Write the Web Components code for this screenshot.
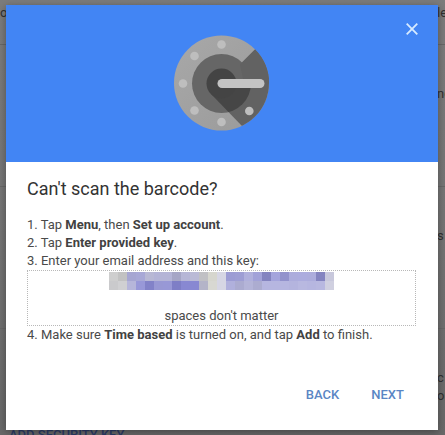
<!DOCTYPE html>
<html lang="en">
<head>
<meta charset="utf-8">
<title>Set up Authenticator</title>
<style>
  body { margin: 0; font-family: Roboto, sans-serif; font-size: 13px; line-height: 18px; color: #4a4a4a; background: #757575; }
</style>
</head>
<body>
<app-shell>
  <settings-page slot="page"></settings-page>
  <setup-dialog>
    <authenticator-logo slot="logo"></authenticator-logo>
    <setup-steps></setup-steps>
    <text-button slot="actions">BACK</text-button>
    <text-button slot="actions">NEXT</text-button>
  </setup-dialog>
</app-shell>
<script>
const define = (name, html, init) => customElements.define(name, class extends HTMLElement {
  constructor() {
    super();
    this.attachShadow({ mode: 'open' }).innerHTML = html;
    if (init) init(this.shadowRoot);
  }
});

define('app-shell', `
<style>
  :host { display: grid; grid-template: minmax(0, 1fr) / minmax(0, 1fr); height: 100vh; overflow: hidden; }
  .page, .over { grid-area: 1 / 1; min-width: 0; min-height: 0; }
  .over { padding: 5px 7px 5px 6px; z-index: 1; display: flex; flex-direction: column; }
</style>
<div class="page"><slot name="page"></slot></div>
<div class="over"><slot></slot></div>`);

define('settings-page', `
<style>
  :host { display: block; height: 100%; overflow: hidden; color: #303030; background: linear-gradient(#7c7c7c, #757575 50%, #696969); }
  section { box-sizing: border-box; height: 142px; border-bottom: 1px solid #686868; display: flex; justify-content: space-between; }
  .first { height: 45px; }
  .last { border: 0; }
  p { margin: 0; padding-top: 40px; }
  .first p { padding-top: 4px; }
  .end { width: 8px; white-space: nowrap; }
  a { color: #2c3c68; text-decoration: none; font-weight: 500; padding: 97px 0 0 9px; white-space: nowrap; }
</style>
<section class="first"><p>or</p><p class="end">le</p></section>
<section><p></p><p class="end">no</p></section>
<section><p></p><p class="end">s</p></section>
<section class="last"><a href="#">ADD SECURITY KEY</a><p class="end">c<br>or</p></section>`);

define('setup-dialog', `
<style>
  :host { flex: 1; display: flex; flex-direction: column; background: #fff; box-shadow: 0 2px 8px rgba(0,0,0,.35); }
  header { background: #4285f4; height: 157px; display: grid; justify-items: center; position: relative; }
  .logo { padding-top: 30px; }
  button { position: absolute; top: 16px; right: 18px; width: 16px; height: 16px; padding: 0; border: 0; background: none; display: grid; place-items: center; }
  main { flex: 1; padding: 0 22px 0 21px; }
  h1 { margin: 0; padding: 15px 0; font-size: 18px; line-height: 24px; font-weight: 400; color: #333; }
  footer { display: flex; justify-content: flex-end; gap: 32px; padding: 0 34px 26px; }
</style>
<header>
  <div class="logo"><slot name="logo"></slot></div>
  <button aria-label="Close"><svg width="12" height="12" viewBox="0 0 12 12"><path d="M.7.7 11.3 11.3M11.3.7.7 11.3" stroke="#d7ebff" stroke-width="1.8"/></svg></button>
</header>
<main><h1>Can't scan the barcode?</h1><slot></slot></main>
<footer><slot name="actions"></slot></footer>`);

define('authenticator-logo', `
<style>:host, svg { display: block; }</style>
<svg width="96" height="96" viewBox="0 0 96 96" aria-hidden="true">
  <defs>
    <linearGradient id="ring" x2="1" y2="1"><stop stop-color="#a8a8a8"/><stop offset="1" stop-color="#9a9a9a"/></linearGradient>
    <clipPath id="disc"><circle cx="47.500" cy="48" r="47.500"/></clipPath>
    <clipPath id="hub"><circle cx="47.500" cy="48.500" r="29.500"/></clipPath>
  </defs>
  <circle cx="47.500" cy="48" r="47.500" fill="url(#ring)"/>
  <path d="M81.500 14 47.500 48 37 59 69 92 96 96V14Z" fill="#626262" clip-path="url(#disc)"/>
  <circle cx="47.500" cy="48.500" r="29.500" fill="#666"/>
  <path d="M81.500 14 66 29.500 70 48H96V14Z" fill="#626262" clip-path="url(#disc)"/>
  <path d="M37 59 69 92 96 48H47Z" fill="#464646" clip-path="url(#hub)"/>
  <circle cx="47.500" cy="48.500" r="15" fill="#444"/>
  <g fill="#bebebe">
    <circle cx="47.500" cy="9.500" r="4.300"/><circle cx="20.500" cy="21" r="4.300"/>
    <circle cx="9" cy="48.500" r="4.300"/><circle cx="20.500" cy="75.500" r="4.300"/>
    <circle cx="47.500" cy="87" r="4.300"/><circle cx="75.300" cy="76" r="4.300"/>
    <rect x="43.500" y="44" width="47" height="9" rx="4.500" fill="#c4c4c4"/>
  </g>
</svg>`);

define('setup-steps', `
<style>
  :host { display: block; }
  ol { list-style: none; margin: 0; padding: 0; }
  .key { box-sizing: border-box; height: 56px; border: 1px dotted #b8b8b8; display: flex; flex-direction: column; align-items: center; justify-content: space-between; }
  b { font-weight: 700; color: #424242; }
  key-mosaic { margin-top: 1px; }
</style>
<ol>
  <li>1. Tap <b>Menu</b>, then <b>Set up account</b>.</li>
  <li>2. Tap <b>Enter provided key</b>.</li>
  <li>3. Enter your email address and this key:
    <div class="key"><key-mosaic></key-mosaic><span>spaces don't matter</span></div></li>
  <li>4. Make sure <b>Time based</b> is turned on, and tap <b>Add</b> to finish.</li>
</ol>`);

define('key-mosaic', `
<style>
  :host { display: grid; grid-template-columns: repeat(25, 9px); grid-auto-rows: 9px; }
</style>`, root => {
  const rows = [
    'cecece c2c2c2 a6a6d2 a8a8d6 b8b8d4 b4b4d6 b4b4d6 a6a6c6 b6b6d6 babad6 c0c0c4 d6d6ce d6d6e4 9c9cd4 9e9ed4 b0b0dc a2a2d8 8484c0 a4a4dc 9292cc acacdc acacde acacdc 8484c0 c8c8dc',
    'cacacc d0d0d2 b6b6da 9898d8 8282c8 9898d4 9898d6 7e7ec6 8888d2 8888d2 b4b4c8 d8d8d2 d6d6e4 b0b0dc ababd0 b4b4d8 acacd0 b6b6e0 b6b6e0 b6b6e0 b4b4de b8b8e0 b6b6e0 b8b8e0 d0d0e0'
  ];
  for (const color of rows.join(' ').split(' ')) {
    const cell = document.createElement('i');
    cell.style.background = '#' + color;
    root.append(cell);
  }
});

define('text-button', `
<style>
  :host { display: block; }
  button { border: 0; padding: 0; background: none; font: inherit; font-weight: 500; color: #5a86c4; }
</style>
<button><slot></slot></button>`);
</script>
</body>
</html>
